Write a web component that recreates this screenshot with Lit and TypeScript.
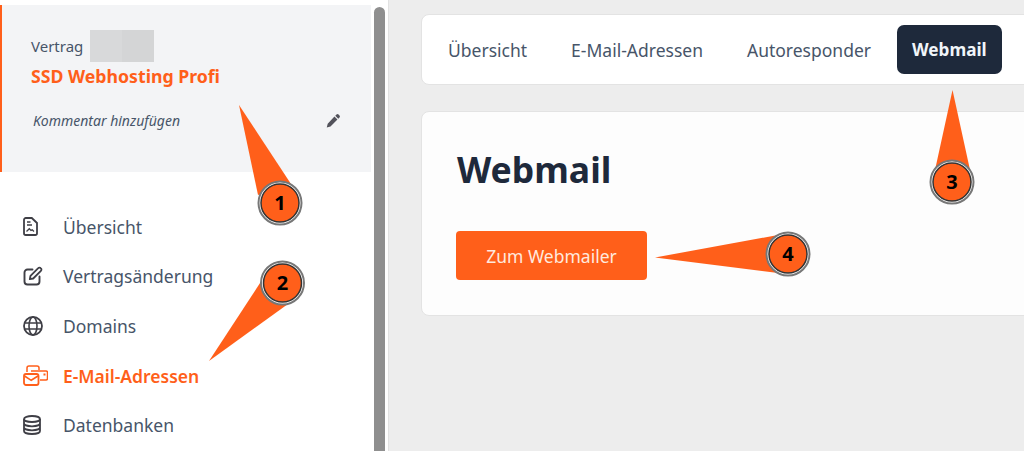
import { LitElement, html, css, svg } from "lit";
import { customElement } from "lit/decorators.js";

const callouts = [
  { n: "1", cx: 280, cy: 203, tri: "239,105 258,195 291,184" },
  { n: "2", cx: 282.5, cy: 283, tri: "209,361 262,280 288,304" },
  { n: "3", cx: 952, cy: 182, tri: "952.5,90 935,170 970,170" },
  { n: "4", cx: 788, cy: 254, tri: "655,257.5 778,235 778,273" },
];

const icons: Record<string, unknown> = {
  doc: svg`<path d="M2.8 1h6l5.2 5v10.2a1.8 1.8 0 0 1-1.8 1.8H2.8A1.8 1.8 0 0 1 1 16.2V2.8A1.8 1.8 0 0 1 2.8 1z" fill="none" stroke="currentColor" stroke-width="1.8"/><path d="M4 5h3.5M4 8h5M3.5 14.5l2.8-2.8 1.7 1.7 1.2-.6 1.8 1.7" fill="none" stroke="currentColor" stroke-width="1.3"/>`,
  edit: svg`<path d="M9.5 3.5H4.5A3 3 0 0 0 1.5 6.500v9A3 3 0 0 0 4.500 18.500h9a3 3 0 0 0 3-3V10.500" fill="none" stroke="currentColor" stroke-width="1.9" stroke-linecap="round"/><path d="M6.800 13.200l.7-3.400 7.700-7.700a1.700 1.700 0 0 1 2.500 0l.2.2a1.700 1.700 0 0 1 0 2.500l-7.700 7.700z" fill="none" stroke="currentColor" stroke-width="1.800" stroke-linejoin="round"/>`,
  globe: svg`<circle cx="10" cy="10" r="9" fill="none" stroke="currentColor" stroke-width="1.800"/><ellipse cx="10" cy="10" rx="4" ry="9" fill="none" stroke="currentColor" stroke-width="1.600"/><path d="M1.500 7h17M1.500 13h17" stroke="currentColor" stroke-width="1.600"/>`,
  mail: svg`<path d="M4 7V3a2 2 0 0 1 2-2h8a2 2 0 0 1 2 2v2M8 6h15a1.500 1.500 0 0 1 1.500 1.500v6a1.500 1.500 0 0 1-1.500 1.500h-6" fill="none" stroke="currentColor" stroke-width="1.500"/><rect x="1" y="9" width="14.500" height="11" rx="2" fill="none" stroke="currentColor" stroke-width="1.800"/><path d="M1.500 11l6.700 4.300 6.800-4.300" fill="none" stroke="currentColor" stroke-width="1.600"/><rect x="20.500" y="8.500" width="2" height="2" fill="currentColor"/>`,
  db: svg`<ellipse cx="9" cy="4" rx="8" ry="3" fill="none" stroke="currentColor" stroke-width="1.800"/><path d="M1 4v12c0 1.700 3.600 3 8 3s8-1.300 8-3V4M1 8.300c0 1.700 3.600 3 8 3s8-1.300 8-3M1 12.300c0 1.700 3.600 3 8 3s8-1.300 8-3" fill="none" stroke="currentColor" stroke-width="1.800"/>`,
};

const nav = [
  { t: "Übersicht", i: "doc", vb: "0 0 15 19", w: 15, h: 19 },
  { t: "Vertragsänderung", i: "edit", vb: "0 0 20 20", w: 20, h: 20 },
  { t: "Domains", i: "globe", vb: "0 0 20 20", w: 20, h: 20 },
  { t: "E-Mail-Adressen", i: "mail", vb: "0 0 25 21", w: 25, h: 21, active: true },
  { t: "Datenbanken", i: "db", vb: "0 0 18 20", w: 18, h: 20 },
];

@customElement("app-root")
export class AppRoot extends LitElement {
  static styles = css`
    :host {
      display: block;
      position: relative;
      width: 1024px;
      height: 451px;
      overflow: hidden;
      background: #ededed;
      font-family: "Noto Sans", sans-serif;
      color: #475569;
    }
    .page { display: flex; height: 451px; }
    .side { width: 372px; flex: none; background: #fff; padding-top: 5px; box-sizing: border-box; }
    .contract {
      height: 167px;
      box-sizing: border-box;
      background: #f3f4f6;
      border-left: 2px solid #ff5f1a;
      padding: 25px 0 0 29px;
      margin-right: 1px;
    }
    .line { display: flex; align-items: center; gap: 7px; height: 32px; font-size: 15px; color: #475569; }
    .redact { display: flex; width: 64px; height: 32px; }
    .redact i { flex: 1; background: #d8d9da; }
    .redact i + i { background: #d4d5d6; }
    .plan { font-size: 17.7px; font-weight: 700; color: #ff5f1a; line-height: 24px; height: 24px; margin-top: 2px; }
    .comment {
      display: flex; justify-content: space-between; align-items: center;
      margin: 22px 30px 0 2px; font-size: 14px; font-style: italic; color: #475569; height: 20px;
    }
    .comment svg { width: 15px; height: 15px; color: #52525b; }
    nav { padding-top: 30px; }
    .item { display: flex; align-items: center; height: 49.6px; font-size: 17.5px; color: #475569; }
    .item.active { color: #ff5f1a; font-weight: 600; }
    .ic { width: 63px; flex: none; padding-left: 23px; box-sizing: border-box; display: flex; color: #3f3f46; }
    .active .ic { color: #ff5f1a; }
    .track { width: 17px; flex: none; background: #fff; padding: 7px 3px 0 2px; box-sizing: border-box; border-right: 1px solid #e2e2e2; }
    .thumb { height: 100%; background: #8f8f8f; border-radius: 6px 6px 0 0; }
    main { flex: 1; min-width: 0; padding: 14px 0 0 32px; }
    .tabs {
      display: flex; align-items: center; gap: 0;
      width: 640px; height: 71px; box-sizing: border-box;
      background: #fff; border: 1px solid #e3e3e3; border-radius: 8px;
      padding-left: 4px; font-size: 17.5px; color: #475569;
    }
    .tab { padding: 0 22px; height: 49px; display: flex; align-items: center; border-radius: 7px; }
    .tab.on { background: #1e293b; color: #f1f5f9; font-weight: 700; font-size: 17.2px; margin-left: 4px; padding: 0 15px; }
    .card {
      width: 640px; height: 205px; margin-top: 26px; box-sizing: border-box;
      background: #fdfdfd; border: 1px solid #e3e3e3; border-radius: 8px;
      padding: 32px 0 0 35px;
    }
    h1 { margin: 0; font-size: 35.5px; line-height: 50px; font-weight: 700; color: #1e293b; }
    .btn {
      display: flex; align-items: center; justify-content: center;
      width: 191px; height: 49px; margin-top: 37px; margin-left: -1px;
      background: #ff5f1a; color: #ffe9de; border-radius: 4px; font-size: 17.5px;
    }
    .over { position: absolute; left: 0; top: 0; width: 1024px; height: 451px; pointer-events: none; }
    .over text { font: 700 20px "Noto Sans", sans-serif; fill: #000; text-anchor: middle; }
  `;

  render() {
    return html`
      <div class="page">
        <aside class="side">
          <div class="contract">
            <div class="line"><span>Vertrag</span><span class="redact"><i></i><i></i></span></div>
            <div class="plan">SSD Webhosting Profi</div>
            <div class="comment">
              <span>Kommentar hinzufügen</span>
              <svg viewBox="0 0 16 16"><path d="M11.2 1.600a1.600 1.600 0 0 1 2.200 0l1 1a1.600 1.600 0 0 1 0 2.200l-1.300 1.300-3.200-3.200zM9 3.800l3.200 3.200-7.400 7.400-4 1 1-4z" fill="currentColor"/></svg>
            </div>
          </div>
          <nav>
            ${nav.map(
              (n) => html`<div class="item ${n.active ? "active" : ""}">
                <span class="ic"><svg viewBox=${n.vb} width=${n.w} height=${n.h}>${icons[n.i]}</svg></span>
                <span>${n.t}</span>
              </div>`
            )}
          </nav>
        </aside>
        <div class="track"><div class="thumb"></div></div>
        <main>
          <div class="tabs">
            <span class="tab">Übersicht</span>
            <span class="tab">E-Mail-Adressen</span>
            <span class="tab">Autoresponder</span>
            <span class="tab on">Webmail</span>
          </div>
          <section class="card">
            <h1>Webmail</h1>
            <div class="btn">Zum Webmailer</div>
          </section>
        </main>
      </div>
      <svg class="over" viewBox="0 0 1024 451">
        ${callouts.map(
          (c) => svg`
            <polygon points=${c.tri} fill="#ff5f1a"/>
            <circle cx=${c.cx} cy=${c.cy} r="21.5" fill="#fff" stroke="#777" stroke-width="2"/>
            <circle cx=${c.cx} cy=${c.cy} r="19" fill="#ff5f1a" stroke="#333" stroke-width="1.500"/>
            <text x=${c.cx} y=${c.cy + 7}>${c.n}</text>`
        )}
      </svg>
    `;
  }
}
